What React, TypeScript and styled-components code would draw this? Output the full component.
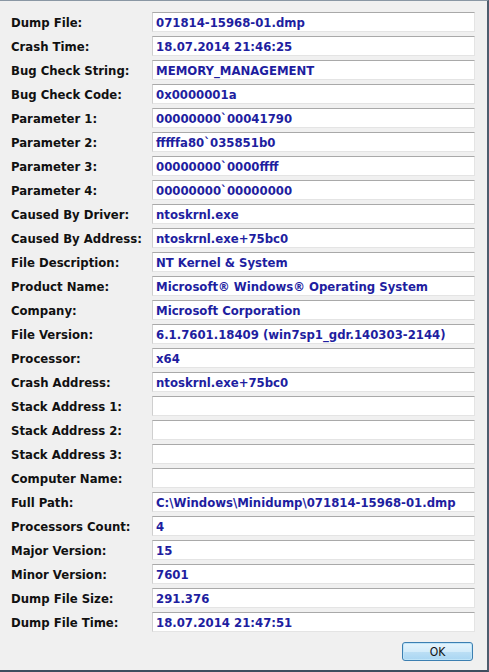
import styled, { createGlobalStyle } from "styled-components";

const GlobalStyle = createGlobalStyle`
  html, body {
    margin: 0;
    padding: 0;
    background: #f0f0f0;
  }
`;

const Window = styled.div`
  width: 489px;
  height: 672px;
  box-sizing: border-box;
  background: #f0f0f0;
  border-top: 1px solid #8a97a4;
  border-right: 2px solid #4d5d6e;
  border-bottom: 2px solid #3e4d5e;
  display: flex;
  flex-direction: column;
  font-family: "DejaVu Sans Condensed", "DejaVu Sans", sans-serif;
`;

const Rows = styled.div`
  display: flex;
  flex-direction: column;
  gap: 4px;
  padding: 11px 12px 0 11px;
`;

const Row = styled.div`
  display: grid;
  grid-template-columns: 141px 1fr;
  align-items: center;
  height: 20px;
`;

const Label = styled.span`
  font-size: 13px;
  font-weight: 700;
  font-stretch: condensed;
  color: #111;
  white-space: nowrap;
`;

const Field = styled.div`
  height: 20px;
  box-sizing: border-box;
  background: #fff;
  border-style: solid;
  border-width: 1px;
  border-color: #a9a9a9 #e4e4e4 #e4e4e4 #cfcfcf;
  padding: 0 3px;
  display: flex;
  align-items: center;
  font-size: 13px;
  font-weight: 700;
  font-stretch: condensed;
  color: #1e1ea0;
  white-space: nowrap;
  overflow: hidden;
`;

const Footer = styled.div`
  display: flex;
  justify-content: flex-end;
  padding: 10px 14px 0 0;
`;

const OkButton = styled.button`
  width: 71px;
  height: 19px;
  box-sizing: border-box;
  border: 1px solid #3c7fb1;
  border-radius: 3px;
  background: linear-gradient(#e5f4fc 0%, #d4ecfa 50%, #bcdff5 51%, #a9d6f2 100%);
  box-shadow: inset 0 0 0 1px #bfe4f8;
  font-family: "DejaVu Sans Condensed", "DejaVu Sans", sans-serif;
  font-size: 12px;
  font-stretch: condensed;
  color: #111;
  padding: 0;
  line-height: 16px;
`;

const rows: [string, string][] = [
  ["Dump File:", "071814-15968-01.dmp"],
  ["Crash Time:", "18.07.2014 21:46:25"],
  ["Bug Check String:", "MEMORY_MANAGEMENT"],
  ["Bug Check Code:", "0x0000001a"],
  ["Parameter 1:", "00000000`00041790"],
  ["Parameter 2:", "fffffa80`035851b0"],
  ["Parameter 3:", "00000000`0000ffff"],
  ["Parameter 4:", "00000000`00000000"],
  ["Caused By Driver:", "ntoskrnl.exe"],
  ["Caused By Address:", "ntoskrnl.exe+75bc0"],
  ["File Description:", "NT Kernel & System"],
  ["Product Name:", "Microsoft® Windows® Operating System"],
  ["Company:", "Microsoft Corporation"],
  ["File Version:", "6.1.7601.18409 (win7sp1_gdr.140303-2144)"],
  ["Processor:", "x64"],
  ["Crash Address:", "ntoskrnl.exe+75bc0"],
  ["Stack Address 1:", ""],
  ["Stack Address 2:", ""],
  ["Stack Address 3:", ""],
  ["Computer Name:", ""],
  ["Full Path:", "C:\\Windows\\Minidump\\071814-15968-01.dmp"],
  ["Processors Count:", "4"],
  ["Major Version:", "15"],
  ["Minor Version:", "7601"],
  ["Dump File Size:", "291.376"],
  ["Dump File Time:", "18.07.2014 21:47:51"],
];

export default function App() {
  return (
    <>
      <GlobalStyle />
      <Window>
        <Rows>
          {rows.map(([label, value]) => (
            <Row key={label}>
              <Label>{label}</Label>
              <Field>{value}</Field>
            </Row>
          ))}
        </Rows>
        <Footer>
          <OkButton>OK</OkButton>
        </Footer>
      </Window>
    </>
  );
}
